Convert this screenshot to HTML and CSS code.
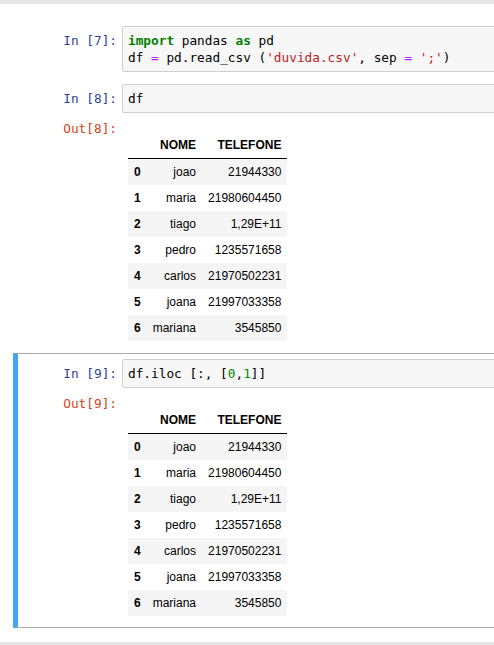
FILE: index.html
```html
<!DOCTYPE html>
<html>
<head>
<meta charset="utf-8">
<link rel="stylesheet" href="styles.css">
</head>
<body>
<div class="topbar"></div>
<div class="viewport">
<div class="notebook">
  <div class="cell">
    <div class="row">
      <div class="prompt in">In&nbsp;[7]:</div>
      <div class="input-area">
        <div class="line"><span class="kw">import</span> pandas <span class="kw">as</span> pd</div>
        <div class="line">df <span class="op">=</span> pd.read_csv (<span class="str">'duvida.csv'</span>, sep <span class="op">=</span> <span class="str">';'</span>)</div>
      </div>
    </div>
  </div>
  <div class="cell">
    <div class="row">
      <div class="prompt in">In&nbsp;[8]:</div>
      <div class="input-area">
        <div class="line">df</div>
      </div>
    </div>
    <div class="row output">
      <div class="prompt out">Out[8]:</div>
      <div class="output-sub">
        <table class="df">
          <thead><tr><th></th><th>NOME</th><th>TELEFONE</th></tr></thead>
          <tbody>
            <tr><th>0</th><td>joao</td><td>21944330</td></tr>
            <tr><th>1</th><td>maria</td><td>21980604450</td></tr>
            <tr><th>2</th><td>tiago</td><td>1,29E+11</td></tr>
            <tr><th>3</th><td>pedro</td><td>1235571658</td></tr>
            <tr><th>4</th><td>carlos</td><td>21970502231</td></tr>
            <tr><th>5</th><td>joana</td><td>21997033358</td></tr>
            <tr><th>6</th><td>mariana</td><td>3545850</td></tr>
          </tbody>
        </table>
      </div>
    </div>
  </div>
  <div class="cell selected">
    <div class="row">
      <div class="prompt in">In&nbsp;[9]:</div>
      <div class="input-area">
        <div class="line">df.iloc [:, [<span class="num">0</span>,<span class="num">1</span>]]</div>
      </div>
    </div>
    <div class="row output">
      <div class="prompt out">Out[9]:</div>
      <div class="output-sub">
        <table class="df">
          <thead><tr><th></th><th>NOME</th><th>TELEFONE</th></tr></thead>
          <tbody>
            <tr><th>0</th><td>joao</td><td>21944330</td></tr>
            <tr><th>1</th><td>maria</td><td>21980604450</td></tr>
            <tr><th>2</th><td>tiago</td><td>1,29E+11</td></tr>
            <tr><th>3</th><td>pedro</td><td>1235571658</td></tr>
            <tr><th>4</th><td>carlos</td><td>21970502231</td></tr>
            <tr><th>5</th><td>joana</td><td>21997033358</td></tr>
            <tr><th>6</th><td>mariana</td><td>3545850</td></tr>
          </tbody>
        </table>
      </div>
    </div>
  </div>
</div>
</div>
<div class="bottombar"></div>
</body>
</html>
```

FILE: styles.css
```css
html, body {
  margin: 0;
  padding: 0;
  background: #ffffff;
  overflow: hidden;
}

.topbar {
  height: 4px;
  background: #e6e6e6;
}

.bottombar {
  height: 10px;
  background: #e6e6e6;
}

.viewport {
  width: 494px;
  overflow: hidden;
}

.notebook {
  width: 540px;
  box-sizing: border-box;
  padding: 16px 0 14px 13px;
}

.cell {
  border: 1px solid transparent;
  border-left-width: 5px;
  padding: 5px;
}

.cell.selected {
  border-color: #ababab;
  border-left-color: #42a5f5;
}

.row {
  display: flex;
  align-items: flex-start;
}

.prompt {
  flex: none;
  width: 99px;
  box-sizing: border-box;
  padding-right: 5px;
  text-align: right;
  font-family: "DejaVu Sans Mono", "Liberation Mono", monospace;
  font-size: 12.75px;
  line-height: 17px;
  white-space: nowrap;
}

.prompt.in {
  color: #303f9f;
  padding-top: 6px;
}

.prompt.out {
  color: #d84315;
}

.input-area {
  flex: 1;
  border: 1px solid #cfcfcf;
  border-radius: 2px;
  background: #f7f7f7;
  padding: 5px 5px;
}

.line {
  font-family: "DejaVu Sans Mono", "Liberation Mono", monospace;
  font-size: 12.75px;
  line-height: 17px;
  height: 17px;
  color: #000;
  white-space: pre;
}

.kw { color: #008000; font-weight: bold; }
.op { color: #aa22ff; }
.str { color: #ba2121; }
.num { color: #008800; }

.output {
  padding-top: 7px;
}

.output-sub {
  padding: 12px 0 6px 6px;
}

.df {
  border-collapse: collapse;
  border-spacing: 0;
  font-family: "Liberation Sans", Arial, sans-serif;
  font-size: 12px;
  line-height: 14px;
  color: #000;
}

.df th, .df td {
  padding: 6px;
  text-align: right;
  vertical-align: middle;
  white-space: nowrap;
}

.df th {
  font-weight: bold;
}

.df thead tr {
  border-bottom: 1px solid #000;
}

.df tbody tr:nth-child(odd) {
  background: #f5f5f5;
}
```
